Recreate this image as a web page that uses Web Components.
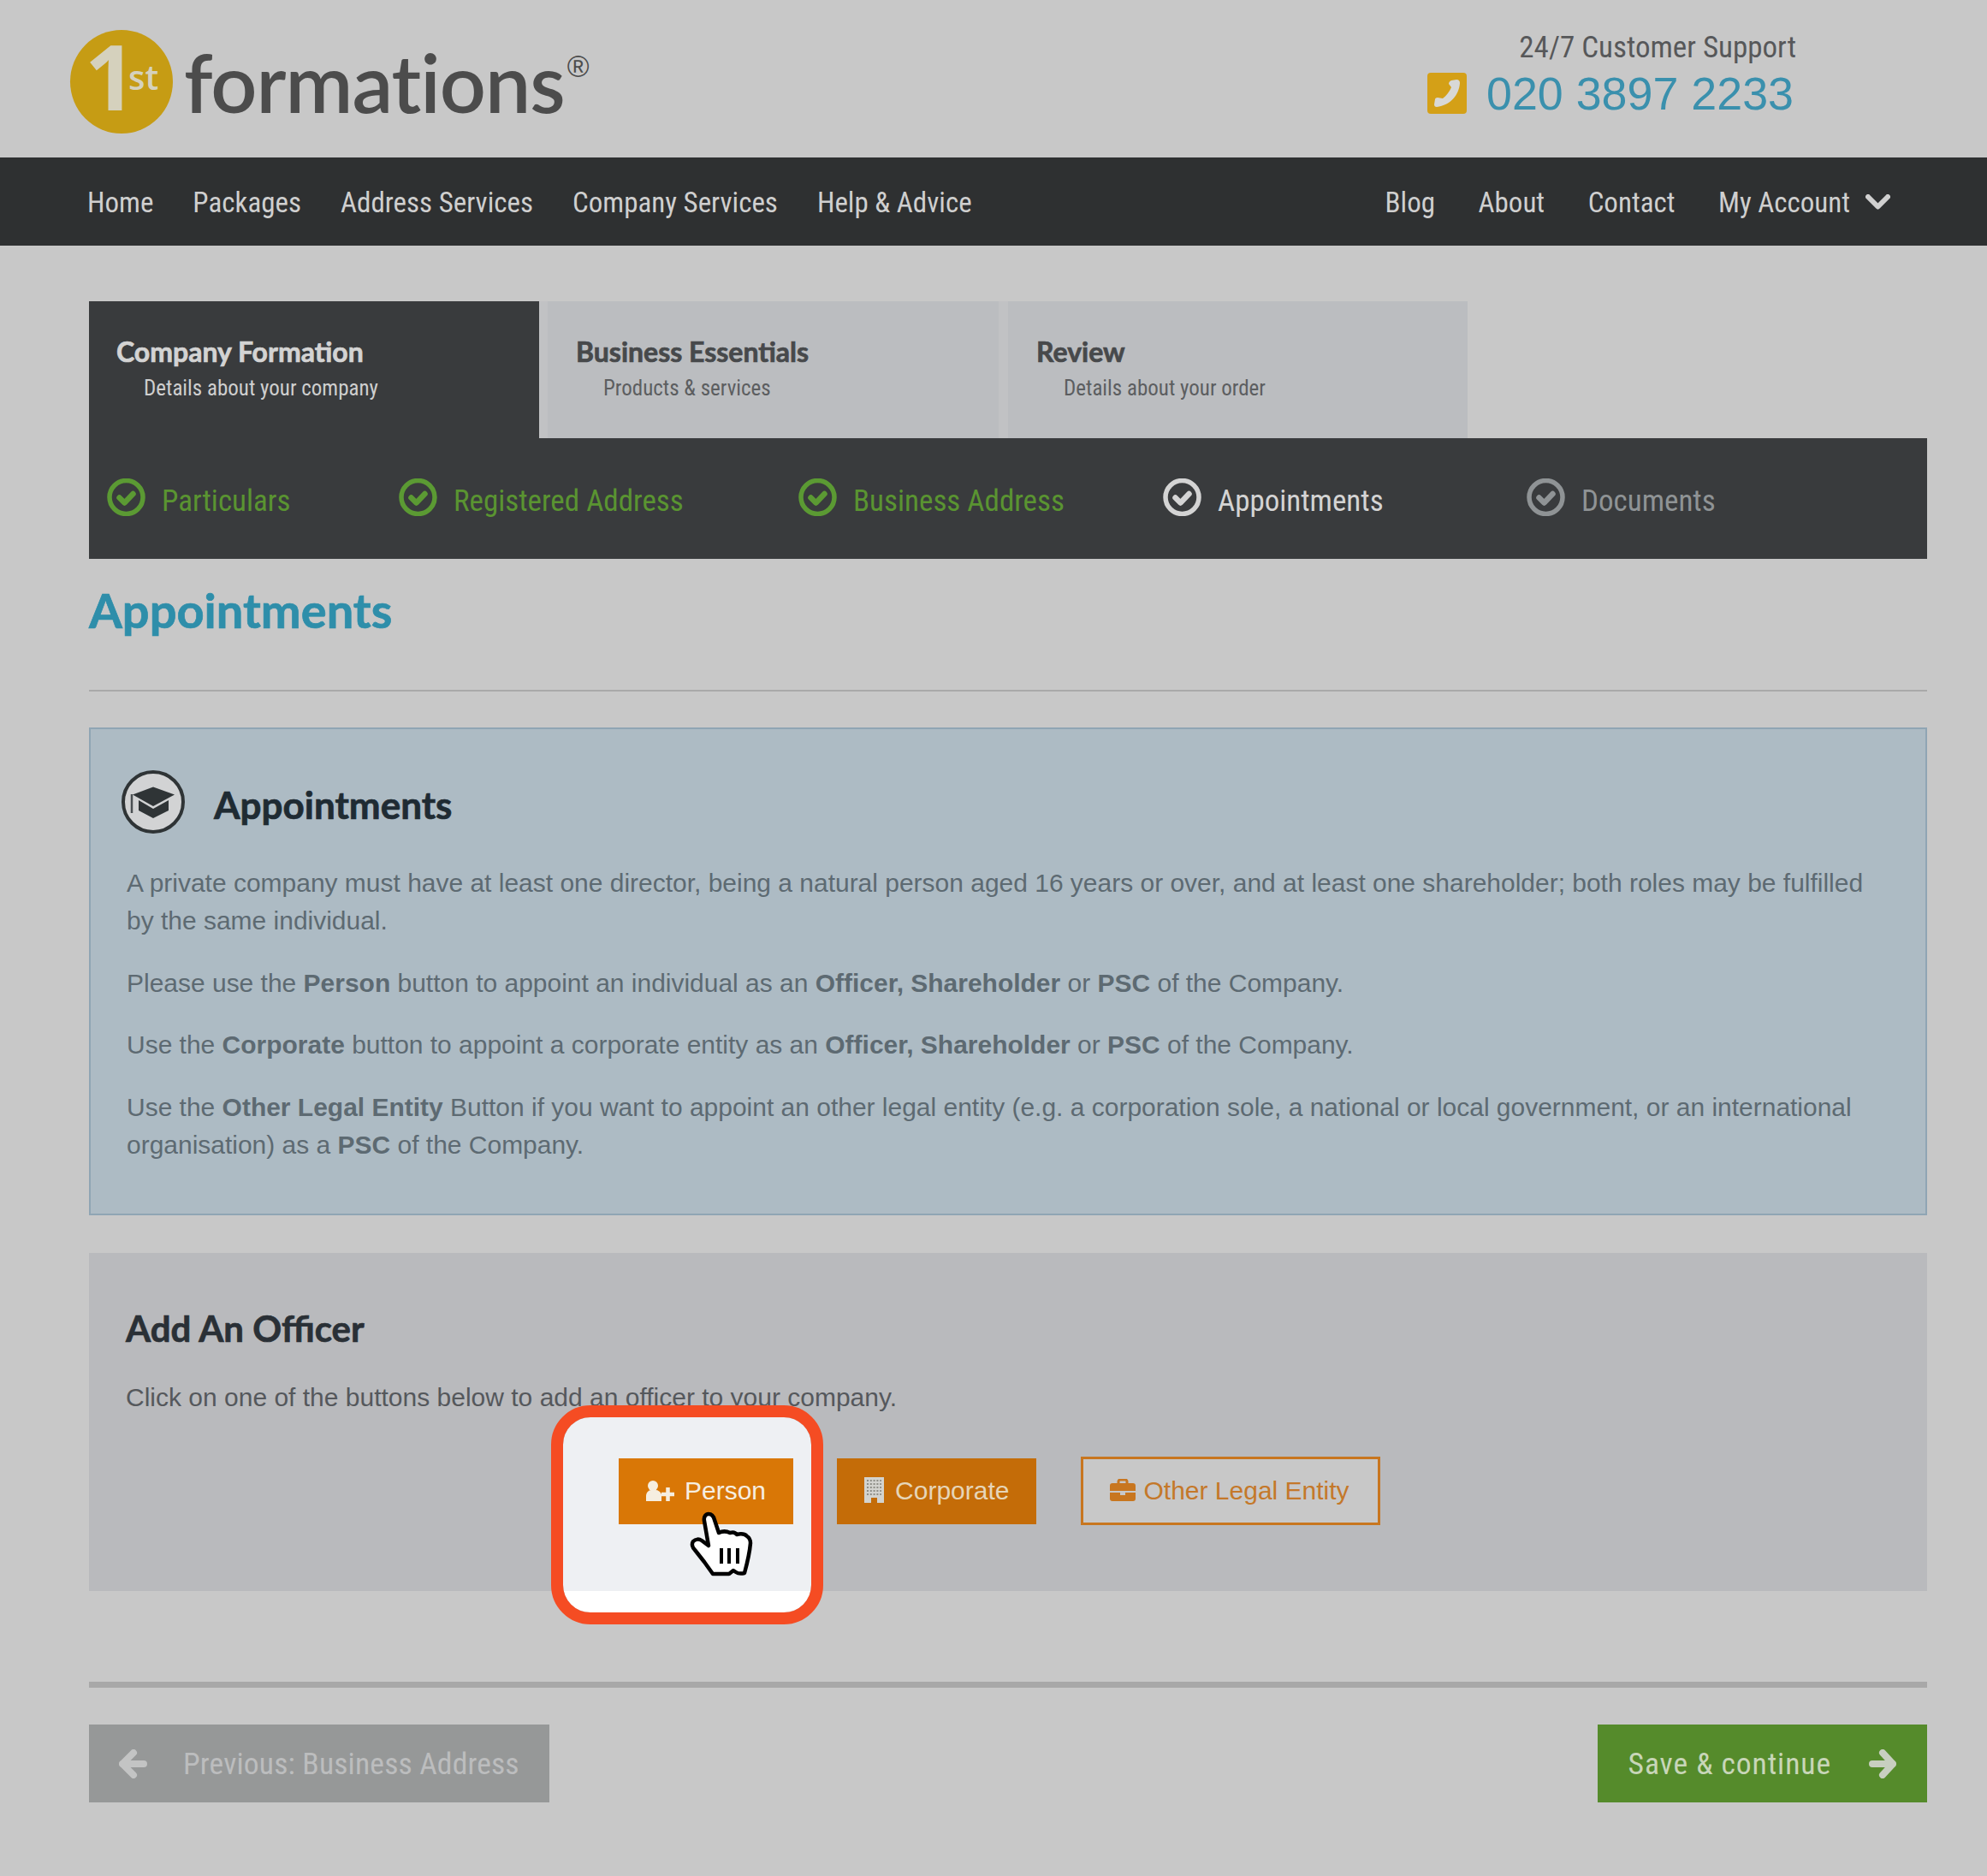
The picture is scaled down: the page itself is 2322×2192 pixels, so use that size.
<!doctype html>
<html lang="en">
<head>
<meta charset="utf-8">
<title>1st Formations - Appointments</title>
<style>
  html, body { margin: 0; background: #c8c8c8; }
  body { font-family: "Liberation Sans", Arial, sans-serif; }
</style>
</head>
<body>

<fm-header></fm-header>

<fm-nav>
  <span>Home</span><span>Packages</span><span>Address Services</span><span>Company Services</span><span>Help &amp; Advice</span>
  <span slot="right">Blog</span><span slot="right">About</span><span slot="right">Contact</span><span slot="right">My Account</span>
</fm-nav>

<fm-page>
  <fm-wizard>
    <fm-tab slot="tabs" active title-text="Company Formation" sub-text="Details about your company"></fm-tab>
    <fm-tab slot="tabs" title-text="Business Essentials" sub-text="Products &amp; services"></fm-tab>
    <fm-tab slot="tabs" title-text="Review" sub-text="Details about your order"></fm-tab>
    <fm-step state="done">Particulars</fm-step>
    <fm-step state="done">Registered Address</fm-step>
    <fm-step state="done">Business Address</fm-step>
    <fm-step state="current">Appointments</fm-step>
    <fm-step state="todo">Documents</fm-step>
  </fm-wizard>

  <fm-title>Appointments</fm-title>

  <fm-info heading="Appointments">
    <p>A private company must have at least one director, being a natural person aged 16 years or over, and at least one shareholder; both roles may be fulfilled by the same individual.</p>
    <p>Please use the <b>Person</b> button to appoint an individual as an <b>Officer, Shareholder</b> or <b>PSC</b> of the Company.</p>
    <p>Use the <b>Corporate</b> button to appoint a corporate entity as an <b>Officer, Shareholder</b> or <b>PSC</b> of the Company.</p>
    <p>Use the <b>Other Legal Entity</b> Button if you want to appoint an other legal entity (e.g. a corporation sole, a national or local government, or an international<br>organisation) as a <b>PSC</b> of the Company.</p>
  </fm-info>

  <fm-officer>
    <fm-action variant="person">Person</fm-action>
    <fm-action variant="corporate">Corporate</fm-action>
    <fm-action variant="other">Other Legal Entity</fm-action>
  </fm-officer>

  <fm-pager previous="Previous: Business Address" next="Save &amp; continue"></fm-pager>
</fm-page>

<script>
// Roboto's 75% face stands in for the narrow regular text, Lato for the bold headings
const narrow = 'font-family: Roboto, "Noto Sans", sans-serif; font-stretch: 75%;';
const heading = 'font-family: Lato, "Noto Sans", sans-serif; font-weight: 700; -webkit-text-stroke: 0.7px currentColor;';

class FmHeader extends HTMLElement {
  constructor() {
    super();
    this.attachShadow({mode: 'open'}).innerHTML = `
      <style>
        :host { display: flex; justify-content: space-between; height: 184px; box-sizing: border-box; padding: 35px 226px 0 82px; }
        .logo { display: flex; align-items: flex-start; }
        .badge { width: 120px; height: 121px; border-radius: 50%; background: #c69c14; color: #d5d1bd; display: flex; align-items: flex-start; font-family: "Open Sans", sans-serif; }
        .one { font-size: 105px; font-weight: 700; line-height: 106px; letter-spacing: -9px; margin: 1px 0 0 17px; }
        .st { font-size: 40px; font-weight: 600; line-height: 40px; margin: 35px 0 0 0; }
        .word { font: 600 95px/95px Lato, sans-serif; letter-spacing: -1px; color: #4c4c4c; margin: 13px 0 0 13px; }
        .reg { font: 35px/35px "Liberation Sans", sans-serif; color: #4c4c4c; margin: 25px 0 0 3px; }
        .support { display: flex; flex-direction: column; align-items: flex-end; }
        .hours { ${narrow} font-size: 35px; line-height: 40px; color: #57585a; margin: 1px -3px 3px 0; }
        .phone { display: flex; align-items: center; gap: 23px; font: 53.8px/60px "Liberation Sans", sans-serif; color: #3a90ad; }
        svg { display: block; }
      </style>
      <div class="logo">
        <div class="badge"><span class="one">1</span><span class="st">st</span></div>
        <span class="word">formations</span><span class="reg">&reg;</span>
      </div>
      <div class="support">
        <span class="hours">24/7 Customer Support</span>
        <div class="phone">
          <svg width="46" height="48" viewBox="0 0 46 48"><rect width="46" height="48" rx="4" fill="#d4a017"/>
            <path d="M28 9l6-1c3 0 4 2 4 4-1 14-11 26-27 28-2 0-3-1-3-3l1-6c0-1 1-2 3-2l6 1c4-3 8-8 10-13l-3-4c0-2 1-3 3-4z" fill="#d8d8d6"/></svg>
          <span>020 3897 2233</span>
        </div>
      </div>`;
  }
}
customElements.define('fm-header', FmHeader);

class FmNav extends HTMLElement {
  constructor() {
    super();
    this.attachShadow({mode: 'open'}).innerHTML = `
      <style>
        :host { display: flex; justify-content: space-between; align-items: center; box-sizing: border-box; height: 103px; padding: 2px 113px 0 102px; background: #2e3031; color: #cfcfcf; ${narrow} font-size: 33px; line-height: 44px; }
        .group { display: flex; align-items: center; gap: 46px; }
        .group.right { gap: 50.5px; }
        svg { display: block; margin: -2px 0 0 -32.5px; }
      </style>
      <div class="group"><slot></slot></div>
      <div class="group right"><slot name="right"></slot>
        <svg width="29" height="18" viewBox="0 0 29 18"><path d="M3 3l11.5 11.5L26 3" fill="none" stroke="#d0d0d0" stroke-width="6" stroke-linecap="round" stroke-linejoin="round"/></svg>
      </div>`;
  }
}
customElements.define('fm-nav', FmNav);

class FmPage extends HTMLElement {
  constructor() {
    super();
    this.attachShadow({mode: 'open'}).innerHTML = `
      <style>:host { display: block; padding: 65px 70px 86px 104px; }</style>
      <slot></slot>`;
  }
}
customElements.define('fm-page', FmPage);

class FmTab extends HTMLElement {
  constructor() {
    super();
    this.attachShadow({mode: 'open'}).innerHTML = `
      <style>
        :host { display: block; box-sizing: border-box; height: 160px; padding: 39px 0 0 33px; background: #bbbdc0; color: #47494b; }
        :host([active]) { background: #393b3d; color: #d3d3d3; padding-left: 32px; }
        .title { ${heading} font-size: 32px; line-height: 40px; }
        .sub { ${narrow} font-size: 25px; line-height: 32px; margin: 7px 0 0 32px; color: #5c5e60; }
        :host([active]) .sub { color: #cfcfcf; }
      </style>
      <div class="title"></div>
      <div class="sub"></div>`;
  }
  connectedCallback() {
    this.shadowRoot.querySelector('.title').textContent = this.getAttribute('title-text');
    this.shadowRoot.querySelector('.sub').textContent = this.getAttribute('sub-text');
  }
}
customElements.define('fm-tab', FmTab);

class FmWizard extends HTMLElement {
  constructor() {
    super();
    this.attachShadow({mode: 'open'}).innerHTML = `
      <style>
        :host { display: block; }
        .tabs { display: grid; grid-template-columns: 526px 10px 527px 11px 537px; }
        ::slotted(fm-tab:nth-of-type(1)) { grid-column: 1; }
        ::slotted(fm-tab:nth-of-type(2)) { grid-column: 3; }
        ::slotted(fm-tab:nth-of-type(3)) { grid-column: 5; }
        .strip { background: #c1c2c4; }
        .steps { display: grid; grid-template-columns: 341px 467px 426px 425px 1fr; height: 141px; box-sizing: border-box; padding: 47px 0 0 21px; background: #393b3d; }
      </style>
      <div class="tabs"><slot name="tabs"></slot><div class="strip" style="grid-column:2;grid-row:1"></div><div class="strip" style="grid-column:4;grid-row:1"></div></div>
      <div class="steps"><slot></slot></div>`;
  }
}
customElements.define('fm-wizard', FmWizard);

class FmStep extends HTMLElement {
  constructor() {
    super();
    this.attachShadow({mode: 'open'}).innerHTML = `
      <style>
        :host { display: flex; align-items: flex-start; gap: 19px; color: #8f9395; ${narrow} font-size: 35px; line-height: 48px; white-space: nowrap; }
        :host([state=done]) { color: #5a9431; }
        :host([state=current]) { color: #d4d4d4; }
        .label { margin-top: 3px; }
        svg { display: block; flex: none; color: #8f9395; }
        :host([state=done]) svg { color: #5b9a33; }
        :host([state=current]) svg { color: #d4d4d4; }
      </style>
      <svg width="45" height="44" viewBox="0 0 45 44" fill="none" stroke="currentColor">
        <circle cx="22.5" cy="22" r="19.5" stroke-width="5.5"/>
        <path d="M14.5 22.5l6 6 10-10.5" stroke-width="6.5" stroke-linecap="round" stroke-linejoin="round"/>
      </svg>
      <span class="label"><slot></slot></span>`;
  }
}
customElements.define('fm-step', FmStep);

class FmTitle extends HTMLElement {
  constructor() {
    super();
    this.attachShadow({mode: 'open'}).innerHTML = `
      <style>
        :host { display: block; margin-top: 25px; padding-bottom: 58px; border-bottom: 2px solid #a9a9a9; color: #2e8eaa; ${heading} font-size: 56px; line-height: 70px; }
      </style>
      <slot></slot>`;
  }
}
customElements.define('fm-title', FmTitle);

class FmInfo extends HTMLElement {
  constructor() {
    super();
    this.attachShadow({mode: 'open'}).innerHTML = `
      <style>
        :host { display: block; margin-top: 42px; box-sizing: border-box; height: 570px; padding: 48px 47px 0 42px; background: #adbbc4; border: 2px solid #8fa5b4; color: #5d6a72; font: 29.97px/44px "Liberation Sans", sans-serif; }
        .head { display: flex; align-items: flex-start; gap: 34px; margin: 0 0 36px -6px; }
        h3 { margin: 12px 0 0; color: #1f2b33; ${heading} font-size: 44px; line-height: 56px; }
        svg { display: block; flex: none; }
        ::slotted(p) { margin: 0 0 28.5px; }
        ::slotted(p) b { color: #50595f; }
      </style>
      <div class="head">
        <svg width="74" height="74" viewBox="0 0 74 74">
          <circle cx="37" cy="37" r="35" fill="#d2d3d4" stroke="#2f3436" stroke-width="4"/>
          <path d="M37 19.5L62 28.5 37 42 13 28.5z" fill="#2f3436"/>
          <path d="M20 35l17 10 18-10v12l-18 9-17-9z" fill="#2f3436"/>
          <path d="M12 28v22" stroke="#4a4f52" stroke-width="2.5"/>
        </svg>
        <h3></h3>
      </div>
      <slot></slot>`;
  }
  connectedCallback() {
    this.shadowRoot.querySelector('h3').textContent = this.getAttribute('heading');
  }
}
customElements.define('fm-info', FmInfo);

class FmOfficer extends HTMLElement {
  constructor() {
    super();
    this.attachShadow({mode: 'open'}).innerHTML = `
      <style>
        :host { display: block; position: relative; margin-top: 44px; box-sizing: border-box; height: 395px; padding: 60px 0 0 43px; background: #b9babd; }
        h3 { margin: 0; color: #2a3036; ${heading} font-size: 42px; line-height: 56px; }
        p { margin: 31px 0 0; color: #55585c; font: 30px/44px "Liberation Sans", sans-serif; }
        .row { position: relative; z-index: 1; display: flex; align-items: center; gap: 51px; height: 80px; margin: 47px 0 0 576px; }
        .spot { position: absolute; left: 540px; top: 178px; width: 318px; height: 256px; box-sizing: border-box; border: 14px solid #f54c23; border-radius: 46px; background: linear-gradient(#eef0f3 203px, #fff 203px) padding-box; }
        .hand { position: absolute; z-index: 2; left: 686px; top: 286px; display: block; }
      </style>
      <h3>Add An Officer</h3>
      <p>Click on one of the buttons below to add an officer to your company.</p>
      <div class="spot"></div>
      <div class="row"><slot></slot></div>
      <svg class="hand" width="110" height="110" viewBox="0 0 110 110">
        <path d="M33 27c-1-5 2-8 5-8 4 0 6 3 7 7l5 15c4-2 9-2 13 0 3-1 6-1 8 2 4-1 9-1 12 2 3 2 4 5 4 8-1 12-4 24-7 35-4 1-7 1-10-1l-3-2-5 4H43L33 75 22 61c-3-3-4-7-2-10 3-3 7-3 10-1l8 6z" fill="#fff" stroke="#000" stroke-width="4.500" stroke-linejoin="round"/>
        <path d="M53 59v18M62 59v18M72 59v18" stroke="#000" stroke-width="4"/>
      </svg>`;
  }
}
customElements.define('fm-officer', FmOfficer);

const actionIcons = {
  person: `<svg width="34" height="25" viewBox="0 0 34 25">
      <circle cx="8" cy="7" r="6" fill="#f6eee0"/>
      <path d="M0 25v-6c0-4 3-7 6-7h5c3 0 6 2 7 5v8z" fill="#f6eee0"/>
      <path d="M18 17h14M25 10v15" stroke="#d97706" stroke-width="8"/>
      <path d="M18 17h15M25.500 9v16" stroke="#f6eee0" stroke-width="4.500"/>
    </svg>`,
  corporate: `<svg width="23" height="30" viewBox="0 0 23 30">
      <rect width="23" height="30" fill="#d3d3cf"/>
      <path d="M3 4h17M3 8h17M3 12h17M3 16h17M3 20h17" stroke="#8f8f88" stroke-width="2" stroke-dasharray="2 1.800"/>
      <rect x="8" y="24" width="7" height="6" fill="#c46c08"/>
    </svg>`,
  other: `<svg width="30" height="26" viewBox="0 0 30 26">
      <path d="M10 6V3c0-1 1-2 2-2h6c1 0 2 1 2 2v3" fill="none" stroke="#c8761f" stroke-width="3"/>
      <path d="M0 8c0-2 1-3 3-3h24c2 0 3 1 3 3v6H0zM0 16h12v3h6v-3h12v7c0 2-1 3-3 3H3c-2 0-3-1-3-3z" fill="#c8761f"/>
    </svg>`
};

class FmAction extends HTMLElement {
  constructor() {
    super();
    this.attachShadow({mode: 'open'}).innerHTML = `
      <style>
        :host { display: flex; align-items: center; box-sizing: border-box; height: 77px; font: 30px/40px "Liberation Sans", sans-serif; white-space: nowrap; }
        :host([variant=person]) { gap: 11px; padding: 0 32px; background: #d97706; color: #f6eee0; }
        :host([variant=corporate]) { gap: 13px; padding: 0 32px; background: #c46c08; color: #e6d5b8; }
        :host([variant=other]) { gap: 9px; height: 80px; margin-left: 1px; padding: 0 33px 0 31px; border: 3px solid #c8761f; background: #c8c8c8; color: #c4782a; }
        svg { display: block; flex: none; margin-top: -2px; }
      </style>
      <span id="icon" style="display:contents"></span><slot></slot>`;
  }
  connectedCallback() {
    this.shadowRoot.getElementById('icon').innerHTML = actionIcons[this.getAttribute('variant')];
  }
}
customElements.define('fm-action', FmAction);

class FmPager extends HTMLElement {
  constructor() {
    super();
    this.attachShadow({mode: 'open'}).innerHTML = `
      <style>
        :host { display: block; margin-top: 106px; border-top: 7px solid #a8a8a8; padding-top: 43px; ${narrow} font-size: 35.6px; line-height: 48px; }
        .bar { display: flex; justify-content: space-between; }
        .btn { display: flex; align-items: center; height: 91px; box-sizing: border-box; white-space: nowrap; }
        .prev { gap: 42px; padding: 0 35px; background: #969898; color: #bcbdbe; letter-spacing: 0.15px; }
        .next { gap: 44px; padding: 0 36px; background: #558b2b; color: #c8d6b8; letter-spacing: 0.9px; }
        svg { display: block; flex: none; }
      </style>
      <div class="bar">
        <div class="btn prev">
          <svg width="33" height="34" viewBox="0 0 33 34"><path d="M17 4L4 17l13 13M4 17h25" fill="none" stroke="#c3c4c4" stroke-width="8" stroke-linecap="round" stroke-linejoin="round"/></svg>
          <span id="p"></span>
        </div>
        <div class="btn next">
          <span id="n"></span>
          <svg width="32" height="34" viewBox="0 0 32 34"><path d="M16 4l12 13-12 13M28 17H4" fill="none" stroke="#c8cfc0" stroke-width="8" stroke-linecap="round" stroke-linejoin="round"/></svg>
        </div>
      </div>`;
  }
  connectedCallback() {
    this.shadowRoot.getElementById('p').textContent = this.getAttribute('previous');
    this.shadowRoot.getElementById('n').textContent = this.getAttribute('next');
  }
}
customElements.define('fm-pager', FmPager);
</script>
</body>
</html>
